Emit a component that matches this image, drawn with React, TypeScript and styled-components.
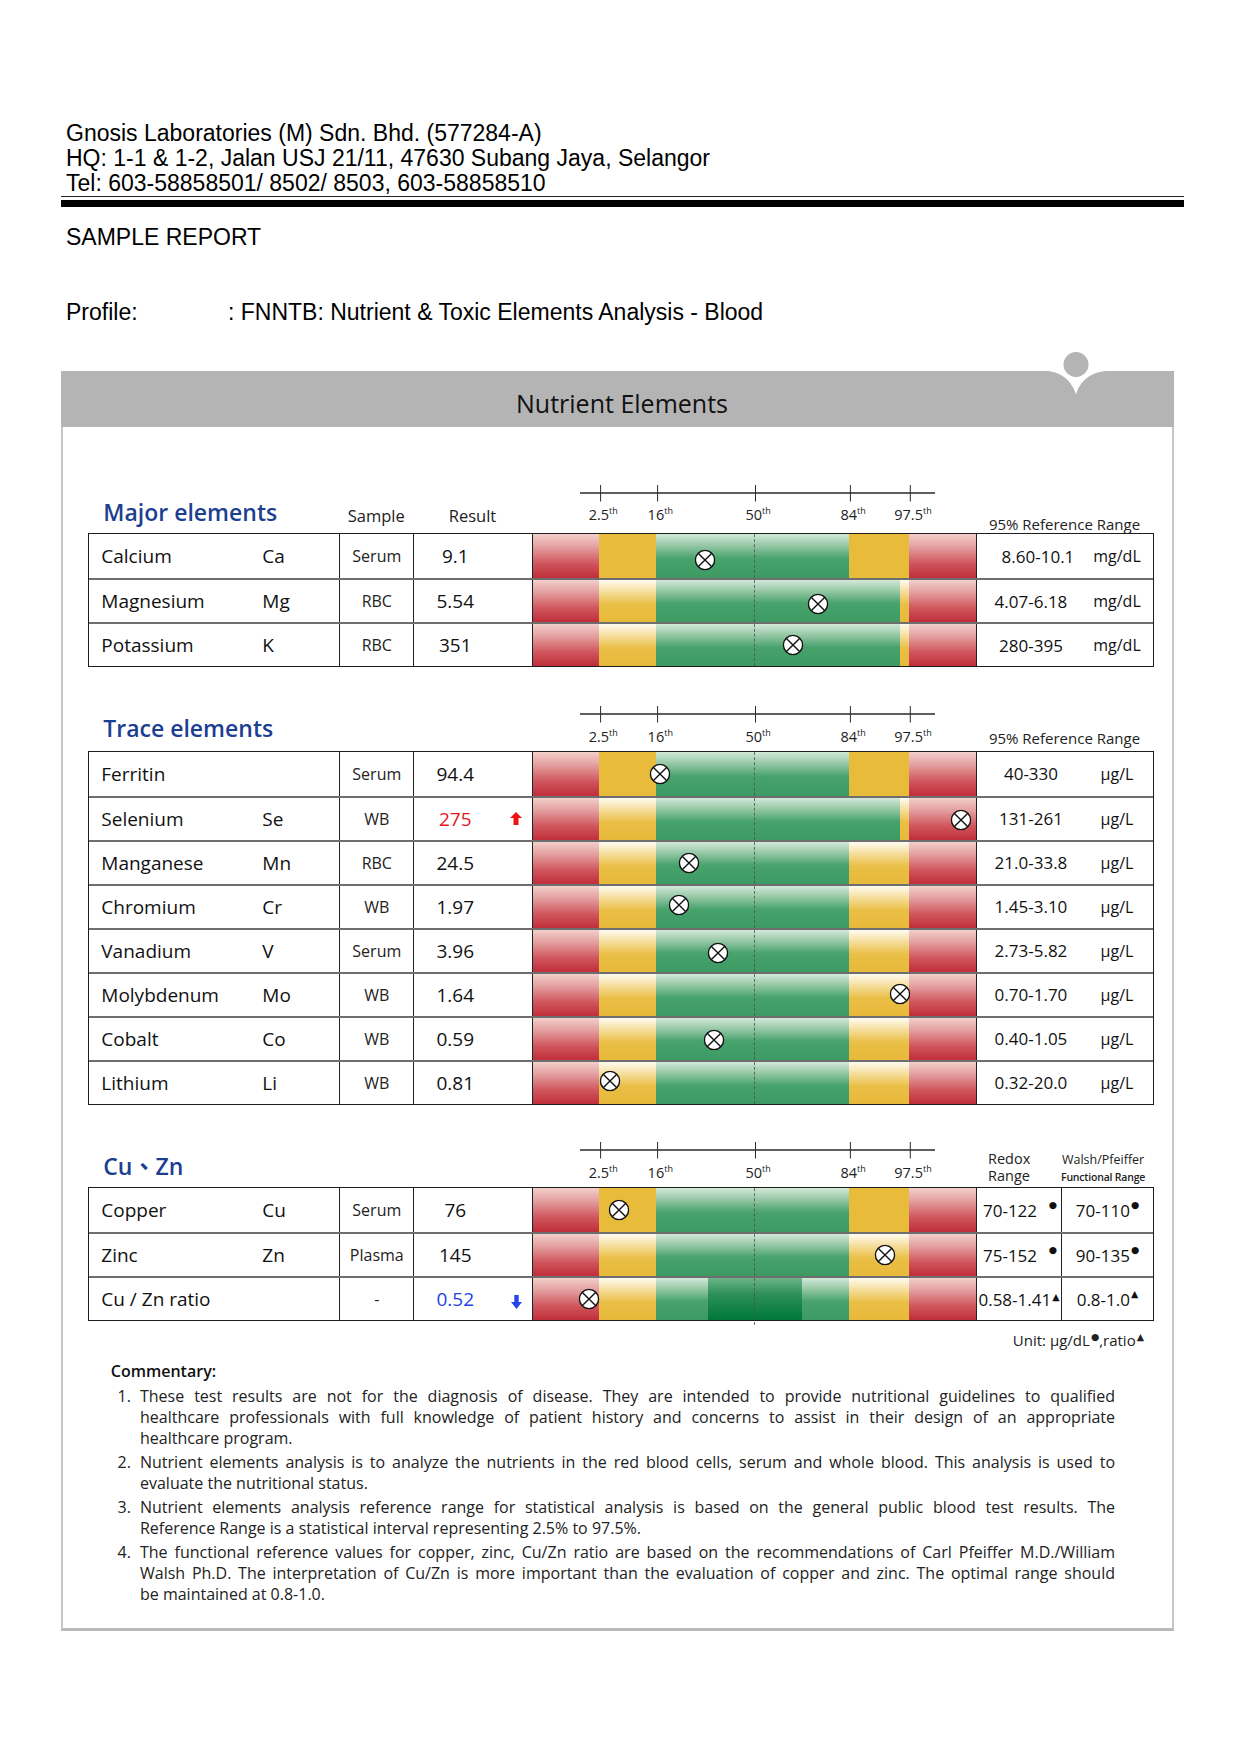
import React from 'react';
import styled, { createGlobalStyle } from 'styled-components';

type Tone = 'red' | 'yellow' | 'green' | 'deep';
type BarKind = 'normal' | 'extended' | 'ratio';
type Flag = 'high' | 'low';

interface Seg { w: number; tone: Tone }
interface RowData {
  name: string;
  symbol?: string;
  sample: string;
  result: string;
  flag?: Flag;
  bar: BarKind;
  marker: number;
  dy?: number;
  range: string;
  rangeShift?: number;
  unit?: string;
  fn?: string;
  compact?: boolean;
  mark?: string;
}
interface SectionData {
  title: string;
  headH: number;
  mt: number;
  titlePb: number;
  labelsBottom: number;
  rrPb: number;
  columnLabels?: boolean;
  redox?: boolean;
  rows: RowData[];
}

const COLS = '250px 74px 118.4px 444.3px 1fr';

const SEGMENTS: Record<BarKind, Seg[]> = {
  normal: [
    { w: 66.6, tone: 'red' },
    { w: 57, tone: 'yellow' },
    { w: 192.8, tone: 'green' },
    { w: 59.9, tone: 'yellow' },
    { w: 67, tone: 'red' },
  ],
  extended: [
    { w: 66.6, tone: 'red' },
    { w: 57, tone: 'yellow' },
    { w: 243.7, tone: 'green' },
    { w: 8.7, tone: 'yellow' },
    { w: 67.3, tone: 'red' },
  ],
  ratio: [
    { w: 66.6, tone: 'red' },
    { w: 57, tone: 'yellow' },
    { w: 52, tone: 'green' },
    { w: 93.4, tone: 'deep' },
    { w: 47.4, tone: 'green' },
    { w: 59.9, tone: 'yellow' },
    { w: 67, tone: 'red' },
  ],
};

const TICKS = [
  { x: 66.6, label: '2.5' },
  { x: 123.6, label: '16' },
  { x: 221.5, label: '50' },
  { x: 316.4, label: '84' },
  { x: 376.3, label: '97.5' },
];

const SECTIONS: SectionData[] = [
  {
    title: 'Major elements',
    headH: 48,
    mt: 0,
    titlePb: 6.9,
    labelsBottom: 8.9,
    rrPb: 0,
    columnLabels: true,
    rows: [
      { name: 'Calcium', symbol: 'Ca', sample: 'Serum', result: '9.1', bar: 'normal', marker: 172.3, dy: 4, range: '8.60-10.1', rangeShift: 14, unit: 'mg/dL' },
      { name: 'Magnesium', symbol: 'Mg', sample: 'RBC', result: '5.54', bar: 'extended', marker: 285.3, dy: 3, range: '4.07-6.18', unit: 'mg/dL' },
      { name: 'Potassium', symbol: 'K', sample: 'RBC', result: '351', bar: 'extended', marker: 260.3, range: '280-395', unit: 'mg/dL' },
    ],
  },
  {
    title: 'Trace elements',
    headH: 45,
    mt: 38.7,
    titlePb: 8,
    labelsBottom: 4.7,
    rrPb: 3.5,
    rows: [
      { name: 'Ferritin', sample: 'Serum', result: '94.4', bar: 'normal', marker: 127.3, range: '40-330', unit: 'µg/L' },
      { name: 'Selenium', symbol: 'Se', sample: 'WB', result: '275', flag: 'high', bar: 'extended', marker: 428, dy: 1.5, range: '131-261', unit: 'µg/L' },
      { name: 'Manganese', symbol: 'Mn', sample: 'RBC', result: '24.5', bar: 'normal', marker: 156.3, range: '21.0-33.8', unit: 'µg/L' },
      { name: 'Chromium', symbol: 'Cr', sample: 'WB', result: '1.97', bar: 'normal', marker: 146.3, dy: -2, range: '1.45-3.10', unit: 'µg/L' },
      { name: 'Vanadium', symbol: 'V', sample: 'Serum', result: '3.96', bar: 'normal', marker: 185.3, dy: 2, range: '2.73-5.82', unit: 'µg/L' },
      { name: 'Molybdenum', symbol: 'Mo', sample: 'WB', result: '1.64', bar: 'normal', marker: 367.3, dy: -1, range: '0.70-1.70', unit: 'µg/L' },
      { name: 'Cobalt', symbol: 'Co', sample: 'WB', result: '0.59', bar: 'normal', marker: 181.3, dy: 1.5, range: '0.40-1.05', unit: 'µg/L' },
      { name: 'Lithium', symbol: 'Li', sample: 'WB', result: '0.81', bar: 'normal', marker: 77.3, dy: -2, range: '0.32-20.0', unit: 'µg/L' },
    ],
  },
  {
    title: 'Cu、Zn',
    headH: 45,
    mt: 37.3,
    titlePb: 6.6,
    labelsBottom: 4.9,
    rrPb: 0,
    redox: true,
    rows: [
      { name: 'Copper', symbol: 'Cu', sample: 'Serum', result: '76', bar: 'normal', marker: 86.3, range: '70-122', fn: '70-110', mark: '●' },
      { name: 'Zinc', symbol: 'Zn', sample: 'Plasma', result: '145', bar: 'normal', marker: 352.3, range: '75-152', fn: '90-135', mark: '●' },
      { name: 'Cu / Zn ratio', sample: '-', result: '0.52', flag: 'low', bar: 'ratio', marker: 56.6, range: '0.58-1.41', fn: '0.8-1.0', compact: true, mark: '▲' },
    ],
  },
];

const NOTES: string[][] = [
  [
    'These test results are not for the diagnosis of disease. They are intended to provide nutritional guidelines to qualified',
    'healthcare professionals with full knowledge of patient history and concerns to assist in their design of an appropriate',
    'healthcare program.',
  ],
  [
    'Nutrient elements analysis is to analyze the nutrients in the red blood cells, serum and whole blood. This analysis is used to',
    'evaluate the nutritional status.',
  ],
  [
    'Nutrient elements analysis reference range for statistical analysis is based on the general public blood test results. The',
    'Reference Range is a statistical interval representing 2.5% to 97.5%.',
  ],
  [
    'The functional reference values for copper, zinc, Cu/Zn ratio are based on the recommendations of Carl Pfeiffer M.D./William',
    'Walsh Ph.D. The interpretation of Cu/Zn is more important than the evaluation of copper and zinc. The optimal range should',
    'be maintained at 0.8-1.0.',
  ],
];

const toneFill = (tone: Tone, gloss: boolean): string => {
  switch (tone) {
    case 'red':
      return 'linear-gradient(180deg, #f3cfcc 0%, #e4a2a2 28%, #cf545b 68%, #c02e3b 100%)';
    case 'yellow':
      return gloss
        ? 'linear-gradient(180deg, #fffbf1 0%, #f5de9c 28%, #eabf46 58%, #e8b939 100%)'
        : '#e8bb3b';
    case 'green':
      return 'linear-gradient(180deg, #d3e9d9 0%, #96c8a6 26%, #47a26c 56%, #3d9a62 100%)';
    case 'deep':
      return 'linear-gradient(180deg, #6cb489 0%, #2c8f57 40%, #00773a 100%)';
    default:
      return '#ccc';
  }
};

const GlobalStyle = createGlobalStyle`
  html, body { margin: 0; padding: 0; background: #ffffff; }
  body { font-family: "Open Sans", "Noto Sans", sans-serif; color: #111; }
  * { box-sizing: border-box; }
`;

const Page = styled.div`
  width: 1241px;
  min-height: 1755px;
  padding: 121px 0 0 61px;
`;

const LabInfo = styled.div`
  padding-left: 5px;
  font-family: "Liberation Sans", Arial, sans-serif;
  font-size: 23px;
  line-height: 25px;
  color: #000;
`;

const DoubleRule = styled.div`
  width: 1123px;
  height: 10.5px;
  border-top: 1.5px solid #222;
  border-bottom: 7px solid #000;
`;

const ReportTitle = styled.div`
  margin-top: 18.4px;
  padding-left: 5px;
  font-family: "Liberation Sans", Arial, sans-serif;
  font-size: 23px;
  line-height: 25px;
  color: #000;
`;

const ProfileRow = styled.div`
  display: flex;
  margin-top: 50.4px;
  padding-left: 5px;
  font-family: "Liberation Sans", Arial, sans-serif;
  font-size: 23px;
  line-height: 25px;
  color: #000;
`;

const ProfileLabel = styled.span`
  width: 162px;
  flex: none;
`;

const Panel = styled.section`
  width: 1113px;
  margin-top: 46.2px;
  border: 2px solid #c6c6c6;
  border-top: none;
  border-bottom: 3px solid #b9b9b9;
`;

const PanelHeader = styled.header`
  position: relative;
  height: 56px;
  margin: 0 -2px;
  padding: 7px 0 0 9px;
  background: #b4b4b4;
  display: flex;
  align-items: center;
  justify-content: center;
  font-size: 25px;
  color: #111;
`;

const Logo = styled.svg`
  position: absolute;
  left: 964px;
  top: -20px;
  overflow: visible;
`;

const PanelBody = styled.div`
  padding: 57.8px 18px 22.4px 25.3px;
`;

const SectionBlock = styled.div<{ $mt: number }>`
  margin-top: ${(p) => p.$mt}px;
`;

const SectionHead = styled.div<{ $h: number }>`
  display: grid;
  grid-template-columns: ${COLS};
  height: ${(p) => p.$h}px;
  padding: 0 1px;
`;

const SectionTitle = styled.h2<{ $pb: number }>`
  grid-column: 1;
  align-self: end;
  margin: 0;
  padding: 0 0 ${(p) => p.$pb}px 14px;
  font-family: "Open Sans", "Noto Sans CJK TC", sans-serif;
  font-size: 23px;
  line-height: 1.25;
  font-weight: 600;
  color: #1c3f92;
  white-space: nowrap;
`;

const ColumnLabel = styled.div<{ $col: number }>`
  grid-column: ${(p) => p.$col};
  align-self: end;
  padding-bottom: 7.1px;
  text-align: center;
  font-size: 16.5px;
  line-height: 1.25;
  color: #222;
`;

const RulerCell = styled.div`
  grid-column: 4;
  position: relative;
  border-left: 1px solid transparent;
`;

const Axis = styled.svg`
  position: absolute;
  left: 1px;
  top: 0;
`;

const TickLabel = styled.span<{ $bottom: number }>`
  position: absolute;
  bottom: ${(p) => p.$bottom}px;
  transform: translateX(-50%);
  font-size: 14.5px;
  line-height: 1.25;
  color: #222;
  white-space: nowrap;
`;

const Ordinal = styled.span`
  font-size: 9px;
  position: relative;
  top: -6px;
`;

const RangeHead = styled.div<{ $pb: number }>`
  grid-column: 5;
  align-self: end;
  padding-bottom: ${(p) => p.$pb}px;
  text-align: center;
  font-size: 15px;
  line-height: 1.25;
  color: #222;
  white-space: nowrap;
`;

const RedoxHead = styled.div`
  grid-column: 5;
  align-self: end;
  display: grid;
  grid-template-columns: 85px 1fr;
  align-items: end;
  color: #222;
`;

const RedoxTitle = styled.div`
  padding: 0 0 3px 12px;
  font-size: 14.5px;
  line-height: 16.5px;
`;

const WalshTitle = styled.div`
  padding: 0 15px 2.9px 0;
  text-align: center;
  white-space: nowrap;
`;

const WalshName = styled.div`
  font-size: 12.5px;
  line-height: 15px;
  margin-bottom: 4.7px;
`;

const WalshSub = styled.div`
  font-size: 10.5px;
  line-height: 13px;
  font-weight: 600;
  letter-spacing: -0.2px;
`;

const Table = styled.div`
  border: 1px solid #1c1c1c;
`;

const Row = styled.div`
  display: grid;
  grid-template-columns: ${COLS};
  height: 44px;
  & + & {
    border-top: 2px solid #6e6e6e;
  }
`;

const NameCell = styled.div`
  display: grid;
  grid-template-columns: 161px 1fr;
  align-items: center;
  padding-left: 12px;
  font-size: 19px;
  color: #111;
`;

const SampleCell = styled.div`
  display: flex;
  align-items: center;
  justify-content: center;
  border-left: 1px solid #222;
  font-size: 16px;
  color: #222;
`;

const ResultCell = styled.div`
  display: flex;
  align-items: center;
  border-left: 1px solid #222;
`;

const ResultValue = styled.span<{ $flag?: Flag }>`
  width: 82px;
  text-align: center;
  font-size: 19px;
  color: ${(p) => (p.$flag === 'high' ? '#e5161e' : p.$flag === 'low' ? '#2142e6' : '#111')};
`;

const FlagBox = styled.span`
  flex: 1;
  display: flex;
  justify-content: center;
  padding-left: 5px;
  line-height: 0;
`;

const BarCell = styled.div`
  position: relative;
  display: flex;
  border-left: 1px solid #222;
`;

const Segment = styled.div<{ $w: number; $tone: Tone; $gloss: boolean }>`
  flex: 0 0 ${(p) => p.$w}px;
  background: ${(p) => toneFill(p.$tone, p.$gloss)};
`;

const MedianLine = styled.div<{ $extend: boolean }>`
  position: absolute;
  left: 221.5px;
  top: 0;
  bottom: ${(p) => (p.$extend ? -5 : 0)}px;
  border-left: 1px dashed #505050;
  opacity: 0.8;
`;

const Marker = styled.div`
  position: absolute;
  top: 50%;
  transform: translate(-50%, -50%);
  line-height: 0;
  z-index: 2;
`;

const RangeCell = styled.div`
  display: grid;
  grid-template-columns: 108px 1fr;
  align-items: center;
  border-left: 1px solid #222;
  color: #111;
`;

const RangeValue = styled.span<{ $shift: number }>`
  padding-left: ${(p) => p.$shift}px;
  text-align: center;
  font-size: 17px;
  white-space: nowrap;
`;

const RangeUnit = styled.span`
  padding-right: 4px;
  text-align: center;
  font-size: 16px;
`;

const RedoxCells = styled.div`
  display: grid;
  grid-template-columns: 84px 1fr;
  border-left: 1px solid #222;
  color: #111;
`;

const RedoxValue = styled.div<{ $compact?: boolean }>`
  display: flex;
  align-items: center;
  justify-content: ${(p) => (p.$compact ? 'center' : 'space-between')};
  padding: ${(p) => (p.$compact ? '0' : '0 4px 0 6px')};
  font-size: 17px;
  white-space: nowrap;
`;

const WalshValue = styled.div`
  display: flex;
  align-items: center;
  justify-content: center;
  border-left: 1px solid #222;
  font-size: 17px;
  white-space: nowrap;
`;

const Mark = styled.span`
  font-family: "DejaVu Sans", sans-serif;
  font-size: 9.5px;
  position: relative;
  top: -6px;
  margin-left: 1px;
`;

const UnitNote = styled.div`
  margin-top: 8.9px;
  padding-right: 10px;
  text-align: right;
  font-size: 15px;
  line-height: 20px;
  color: #222;
`;

const Commentary = styled.div`
  margin-top: 6.4px;
  padding: 0 39px 0 22.5px;
  color: #222;
`;

const CommentaryTitle = styled.div`
  font-size: 16px;
  line-height: 22px;
  font-weight: 600;
  color: #111;
`;

const NoteList = styled.ol`
  list-style: none;
  margin: 4.5px 0 0;
  padding: 0 0 0 6.7px;
`;

const NoteItem = styled.li`
  display: grid;
  grid-template-columns: 22.5px 1fr;
  font-size: 16px;
  line-height: 21.2px;
  & + & {
    margin-top: 2.5px;
  }
`;

const NoteNumber = styled.span``;

const NoteLine = styled.div<{ $last: boolean }>`
  text-align: justify;
  text-align-last: ${(p) => (p.$last ? 'left' : 'justify')};
`;

const MarkerIcon = () => (
  <svg width="21" height="21" viewBox="0 0 21 21">
    <circle cx="10.5" cy="10.5" r="9.6" fill="#fff" stroke="#111" strokeWidth="1.4" />
    <path d="M3.7 3.7 L17.3 17.3 M17.3 3.7 L3.7 17.3" stroke="#111" strokeWidth="1.4" />
  </svg>
);

const UpArrow = () => (
  <svg width="12" height="13" viewBox="0 0 12 13">
    <path d="M6 0 L12 6 L8.5 6 L8.5 13 L3.5 13 L3.5 6 L0 6 Z" fill="#f01212" />
  </svg>
);

const DownArrow = () => (
  <svg width="11" height="14" viewBox="0 0 11 14" style={{ marginTop: 5 }}>
    <path d="M3.3 0 H7.7 V7 H11 L5.5 14 L0 7 H3.3 Z" fill="#2546e8" />
  </svg>
);

const AxisDrawing = () => (
  <Axis width="443" height="18" viewBox="0 0 443 18">
    <line x1="46" y1="8" x2="401" y2="8" stroke="#2a2a2a" strokeWidth="1.6" />
    {TICKS.map((t) => (
      <line key={t.label} x1={t.x} y1="0" x2={t.x} y2="16.5" stroke="#2a2a2a" strokeWidth="1" />
    ))}
  </Axis>
);

const ResultRow = ({ row, first, redox }: { row: RowData; first: boolean; redox?: boolean }) => (
  <Row>
    <NameCell>
      <span>{row.name}</span>
      <span>{row.symbol}</span>
    </NameCell>
    <SampleCell>{row.sample}</SampleCell>
    <ResultCell>
      <ResultValue $flag={row.flag}>{row.result}</ResultValue>
      <FlagBox>
        {row.flag === 'high' && <UpArrow />}
        {row.flag === 'low' && <DownArrow />}
      </FlagBox>
    </ResultCell>
    <BarCell>
      {SEGMENTS[row.bar].map((seg, i) => (
        <Segment key={i} $w={seg.w} $tone={seg.tone} $gloss={!first} />
      ))}
      <MedianLine $extend={row.bar === 'ratio'} />
      <Marker style={{ left: row.marker, marginTop: row.dy ?? 0 }}>
        <MarkerIcon />
      </Marker>
    </BarCell>
    {redox ? (
      <RedoxCells>
        <RedoxValue $compact={row.compact}>
          <span>
            {row.range}
            {row.compact && <Mark>{row.mark}</Mark>}
          </span>
          {!row.compact && <Mark>{row.mark}</Mark>}
        </RedoxValue>
        <WalshValue>
          {row.fn}
          <Mark>{row.mark}</Mark>
        </WalshValue>
      </RedoxCells>
    ) : (
      <RangeCell>
        <RangeValue $shift={row.rangeShift ?? 0}>{row.range}</RangeValue>
        <RangeUnit>{row.unit}</RangeUnit>
      </RangeCell>
    )}
  </Row>
);

const Section = ({ s }: { s: SectionData }) => (
  <SectionBlock $mt={s.mt}>
    <SectionHead $h={s.headH}>
      <SectionTitle $pb={s.titlePb}>{s.title}</SectionTitle>
      {s.columnLabels && (
        <>
          <ColumnLabel $col={2}>Sample</ColumnLabel>
          <ColumnLabel $col={3}>Result</ColumnLabel>
        </>
      )}
      <RulerCell>
        <AxisDrawing />
        {TICKS.map((t) => (
          <TickLabel key={t.label} $bottom={s.labelsBottom} style={{ left: t.x + 4 }}>
            {t.label}
            <Ordinal>th</Ordinal>
          </TickLabel>
        ))}
      </RulerCell>
      {s.redox ? (
        <RedoxHead>
          <RedoxTitle>
            Redox
            <br />
            Range
          </RedoxTitle>
          <WalshTitle>
            <WalshName>Walsh/Pfeiffer</WalshName>
            <WalshSub>Functional Range</WalshSub>
          </WalshTitle>
        </RedoxHead>
      ) : (
        <RangeHead $pb={s.rrPb}>95% Reference Range</RangeHead>
      )}
    </SectionHead>
    <Table>
      {s.rows.map((r, i) => (
        <ResultRow key={r.name} row={r} first={i === 0} redox={s.redox} />
      ))}
    </Table>
  </SectionBlock>
);

export default function App() {
  return (
    <>
      <GlobalStyle />
      <Page>
        <LabInfo>
          <div>Gnosis Laboratories (M) Sdn. Bhd. (577284-A)</div>
          <div>HQ: 1-1 &amp; 1-2, Jalan USJ 21/11, 47630 Subang Jaya, Selangor</div>
          <div>Tel: 603-58858501/ 8502/ 8503, 603-58858510</div>
        </LabInfo>
        <DoubleRule />
        <ReportTitle>SAMPLE REPORT</ReportTitle>
        <ProfileRow>
          <ProfileLabel>Profile:</ProfileLabel>
          <span>: FNNTB: Nutrient &amp; Toxic Elements Analysis - Blood</span>
        </ProfileRow>
        <Panel>
          <PanelHeader>
            Nutrient Elements
            <Logo width="100" height="50" viewBox="0 0 100 50">
              <path d="M20 20 C36 20 47 30 51 43.5 C55 30 66 20 84 20 Z" fill="#ffffff" />
              <circle cx="51" cy="13.5" r="12.5" fill="#b4b4b4" />
            </Logo>
          </PanelHeader>
          <PanelBody>
            {SECTIONS.map((s) => (
              <Section key={s.title} s={s} />
            ))}
            <UnitNote>
              Unit: µg/dL<Mark>●</Mark>,ratio<Mark>▲</Mark>
            </UnitNote>
            <Commentary>
              <CommentaryTitle>Commentary:</CommentaryTitle>
              <NoteList>
                {NOTES.map((lines, i) => (
                  <NoteItem key={i}>
                    <NoteNumber>{i + 1}.</NoteNumber>
                    <div>
                      {lines.map((l, j) => (
                        <NoteLine key={j} $last={j === lines.length - 1}>
                          {l}
                        </NoteLine>
                      ))}
                    </div>
                  </NoteItem>
                ))}
              </NoteList>
            </Commentary>
          </PanelBody>
        </Panel>
      </Page>
    </>
  );
}
